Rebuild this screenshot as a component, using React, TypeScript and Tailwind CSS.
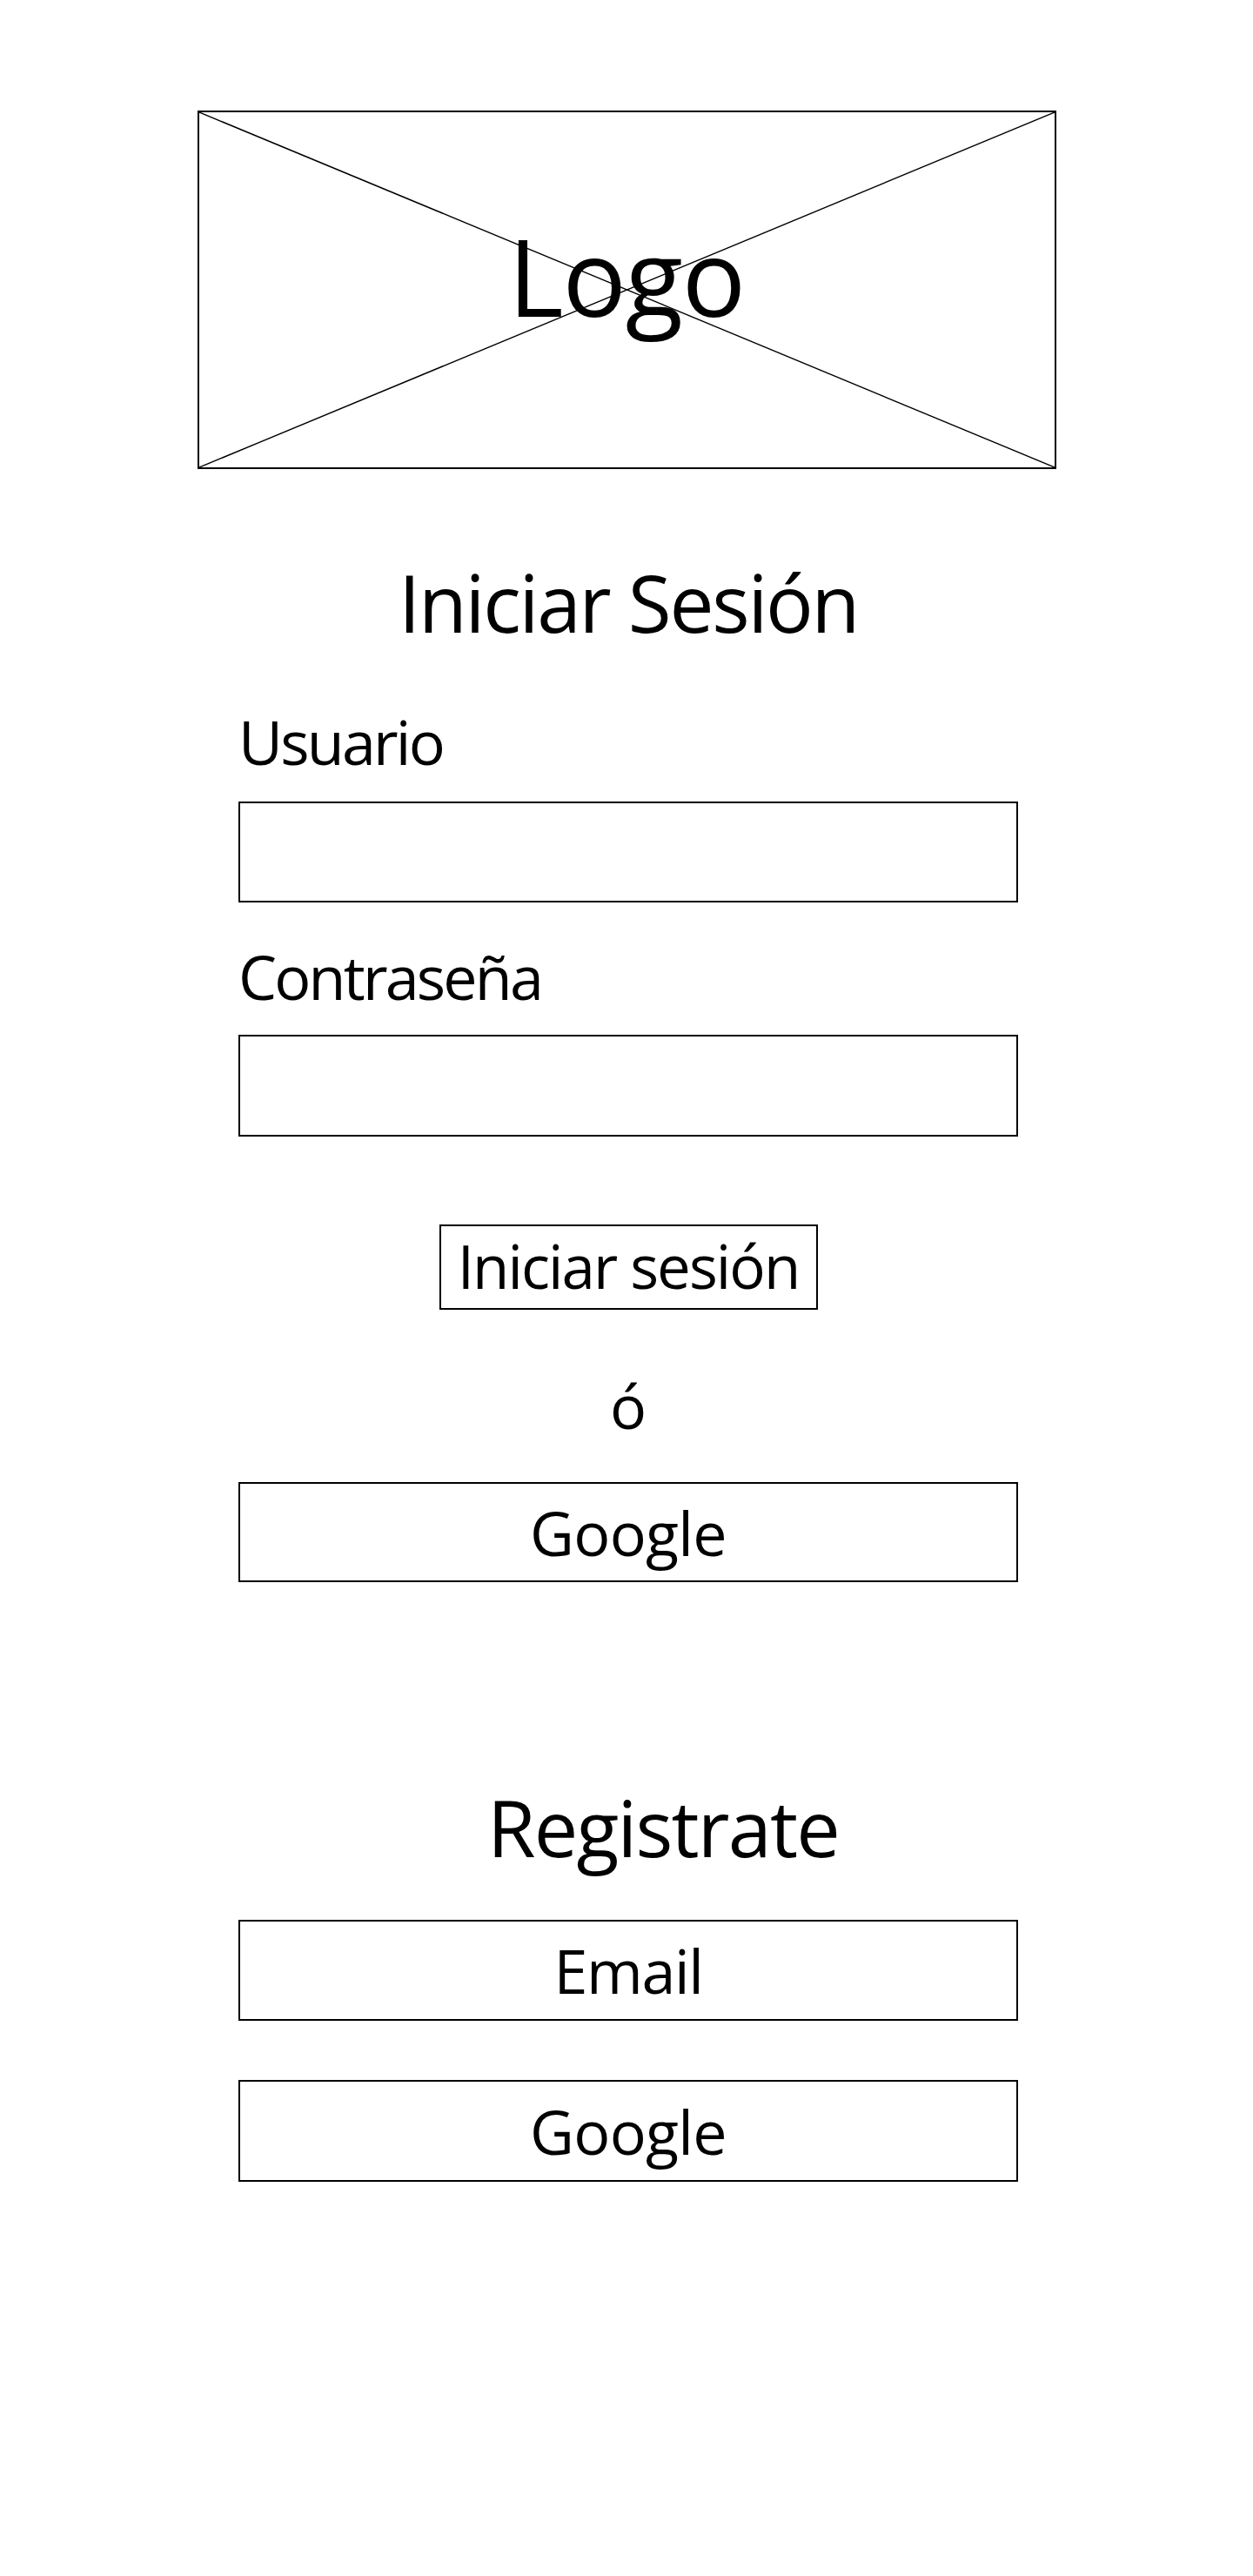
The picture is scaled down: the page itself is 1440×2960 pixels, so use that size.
export default function App() {
  return (
    <div className="min-h-screen w-full bg-white pb-[400px] text-black font-['Open_Sans',sans-serif]">
      {/* Logo placeholder */}
      <div className="mx-auto w-[987px] pt-[127px]">
        <div className="relative flex h-[412px] items-center justify-center border-2 border-black">
          <svg className="absolute inset-0 h-full w-full" viewBox="0 0 100 100" preserveAspectRatio="none">
            <line x1="0" y1="0" x2="100" y2="100" stroke="black" strokeWidth="1.4" vectorEffect="non-scaling-stroke" />
            <line x1="100" y1="0" x2="0" y2="100" stroke="black" strokeWidth="1.4" vectorEffect="non-scaling-stroke" />
          </svg>
          <span className="relative mb-[32px] text-[122px] leading-none tracking-[-0.01em]">Logo</span>
        </div>
      </div>

      <div className="mx-auto w-[900px] pl-[4px]">
        {/* Login */}
        <h1 className="mt-[108px] text-center text-[91px] leading-none tracking-[-0.025em]">Iniciar Sesión</h1>

        <label className="mt-[79px] block text-[70px] leading-none tracking-[-0.04em]">Usuario</label>
        <input type="text" className="mt-[34px] block h-[116px] w-full border-2 border-black outline-none" />

        <label className="mt-[50px] block text-[70px] leading-none tracking-[-0.04em]">Contraseña</label>
        <input type="password" className="mt-[32px] block h-[117px] w-full border-2 border-black outline-none" />

        <div className="mt-[101px] flex justify-center">
          <button className="h-[98px] w-[435px] border-2 border-black text-[69px] leading-none tracking-[-0.028em]">
            <span className="mb-[4px] block h-[69px]">Iniciar sesión</span>
          </button>
        </div>

        <p className="mt-[75px] text-center text-[70px] leading-none">ó</p>

        <button className="mt-[53px] block h-[115px] w-full border-2 border-black text-center text-[70px] leading-none tracking-[-0.01em]">
          Google
        </button>

        {/* Register */}
        <h2 className="mt-[236px] pl-[80px] text-center text-[90px] leading-none tracking-[-0.02em]">Registrate</h2>

        <button className="mt-[62px] block h-[116px] w-full border-2 border-black text-center text-[70px] leading-none tracking-[-0.02em]">
          Email
        </button>

        <button className="mt-[68px] block h-[117px] w-full border-2 border-black text-center text-[70px] leading-none tracking-[-0.01em]">
          Google
        </button>
      </div>
    </div>
  );
}
